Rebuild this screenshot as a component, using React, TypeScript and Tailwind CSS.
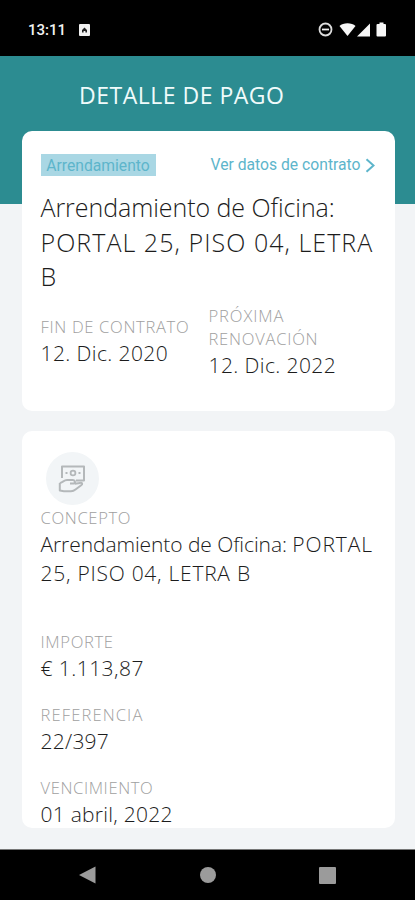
import type { ReactNode } from 'react';

interface Line {
    text: ReactNode;
    className: string;
}

interface FieldProps {
    labels: Line[];
    values: Line[];
}

function Field({ labels, values }: FieldProps) {
    return (
        <div className="font-light whitespace-nowrap">
            {labels.map((label, i) => (
                <div key={i} className={`h-[23px] text-[16.6px] leading-[23px] text-[#a0a0a0] ${label.className}`}>
                    {label.text}
                </div>
            ))}
            <div className="pt-px">
                {values.map((value, i) => (
                    <div key={i} className={`h-[28.5px] text-[21px] leading-[28.5px] text-[#1c1c1c] ${value.className}`}>
                        {value.text}
                    </div>
                ))}
            </div>
        </div>
    );
}

function StatusBar() {
    return (
        <div className="flex h-[56px] shrink-0 items-center justify-between bg-black pt-[4px] pr-[28px] pl-[28px] text-[#f2f2f2]">
            <div className="flex items-center gap-[14px]">
                <span className="w-[37px] font-['Roboto',sans-serif] text-[15px] leading-[20px] font-medium whitespace-nowrap">13:11</span>
                <svg width="11" height="12" viewBox="0 0 11 12">
                    <rect width="11" height="12" rx="1" fill="#f0f0f0" />
                    <path d="M3 8.500V6L5.500 3.500 8 6v2.500H6.400V7H4.600v1.500z" fill="#222" />
                </svg>
            </div>
            <svg width="70" height="16" viewBox="0 0 70 16" fill="#f7f7f7">
                <circle cx="8.500" cy="7.500" r="6" fill="none" stroke="#dcdcdc" strokeWidth="1.8" />
                <path d="M5 7.500h7" stroke="#eee" strokeWidth="1.8" />
                <path d="M22.500 4C26 .3 35 .3 38.500 4L30.500 14z" />
                <path d="M53 1.500V14.500H40z" />
                <path d="M60.500 2h2V.5h4V2h1.500q1 0 1 1v10.500q0 1-1 1h-7.500q-1 0-1-1V3q0-1 1-1z" />
            </svg>
        </div>
    );
}

function MoneyHandIcon() {
    return (
        <svg width="28" height="28" viewBox="0 0 28 28" fill="none" stroke="#b4b8ba" strokeWidth="2" strokeLinejoin="round">
            <path d="M4 13V1.500H26V15.500H18" />
            <circle cx="15" cy="8" r="2.400" strokeWidth="1.8" />
            <path d="M7.500 8h2M20.500 8h2" />
            <path d="M1.800 18C4.500 17.500 6 15 9 15H14.500C17.500 15 17.800 18.500 15 18.500H12M16.800 18.700L22 17.900C24.500 17.600 24.800 19.200 23.200 20.200L17.500 24.500C16.200 25.600 15 26.200 13 26.200H7C5 26.200 4 25.600 1.800 25.600V18" />
        </svg>
    );
}

export default function App() {
    return (
        <div className="flex h-[900px] w-[415px] flex-col overflow-hidden bg-[#f2f4f6] font-['Open_Sans',sans-serif]">
            <StatusBar />

            {/* Header */}
            <header className="h-[148px] shrink-0 bg-[#2c8c91] pt-[23px] pl-[79px]">
                <h1 className="text-[23px] leading-[32px] font-medium tracking-[0.5px] whitespace-nowrap text-[#f0fbfb]">DETALLE DE PAGO</h1>
            </header>

            <main className="-mt-[73.300px] flex grow flex-col gap-[20.500px] pr-[20.500px] pl-[21.500px]">
                {/* Contract */}
                <section className="h-[280px] shrink-0 rounded-[10px] bg-white px-[19px] pt-[23px]">
                    <div className="flex h-[22px] items-center justify-between font-['Roboto',sans-serif] text-[15.700px] leading-[22px] whitespace-nowrap text-[#5db5cb]">
                        <span className="h-[22px] w-[115px] bg-[#a9d7e4] pt-px text-center">Arrendamiento</span>
                        <span className="flex items-center pt-[1px]">
                            Ver datos de contrato
                            <svg className="ml-[4px]" width="11" height="15" viewBox="0 0 11 15" fill="none" stroke="currentColor" strokeWidth="2">
                                <path d="M1.500 1.200L8.500 7.500L1.500 13.800" />
                            </svg>
                        </span>
                    </div>
                    <h2 className="mt-[14.500px] text-[25px] leading-[34.500px] font-light whitespace-nowrap text-[#1c1c1c]">
                        <div className="tracking-[-0.06px]">Arrendamiento de Oficina:</div>
                        <div className="tracking-[1.05px]">PORTAL 25, PISO 04, LETRA</div>
                        <div>B</div>
                    </h2>
                    <div className="mt-[10px] grid grid-cols-[168px_1fr] items-center">
                        <Field
                            labels={[{ text: 'FIN DE CONTRATO', className: 'tracking-[0.66px]' }]}
                            values={[{ text: '12. Dic. 2020', className: 'tracking-[0.4px]' }]}
                        />
                        <Field
                            labels={[
                                { text: 'PRÓXIMA', className: 'tracking-[0.9px]' },
                                { text: 'RENOVACIÓN', className: 'tracking-[0.75px]' }
                            ]}
                            values={[{ text: '12. Dic. 2022', className: 'tracking-[0.4px]' }]}
                        />
                    </div>
                </section>

                {/* Payment */}
                <section className="h-[397px] shrink-0 overflow-hidden rounded-[10px] bg-white px-[19px] pt-[21px]">
                    <div className="ml-[5px] flex h-[53px] w-[53px] items-center justify-center rounded-full bg-[#f2f5f7]">
                        <MoneyHandIcon />
                    </div>
                    <div className="mt-[1px] flex flex-col">
                        <Field
                            labels={[{ text: 'CONCEPTO', className: 'tracking-[0.65px]' }]}
                            values={[
                                {
                                    text: (
                                        <>
                                            Arrendamiento de Oficina: <span className="tracking-[0.9px]">PORTAL</span>
                                        </>
                                    ),
                                    className: 'tracking-[-0.08px]'
                                },
                                { text: '25, PISO 04, LETRA B', className: 'tracking-[0.74px]' }
                            ]}
                        />
                        <div className="mt-[42.500px] flex flex-col gap-[20.500px]">
                            <Field
                                labels={[{ text: 'IMPORTE', className: 'tracking-[0.65px]' }]}
                                values={[{ text: '€ 1.113,87', className: 'tracking-[0.45px]' }]}
                            />
                            <Field
                                labels={[{ text: 'REFERENCIA', className: 'tracking-[1.1px]' }]}
                                values={[{ text: '22/397', className: 'tracking-[0.25px]' }]}
                            />
                            <Field
                                labels={[{ text: 'VENCIMIENTO', className: 'tracking-[0.6px]' }]}
                                values={[{ text: '01 abril, 2022', className: 'tracking-[0.25px]' }]}
                            />
                        </div>
                    </div>
                </section>
            </main>

            {/* Android navigation */}
            <nav className="flex h-[51px] shrink-0 items-center justify-between border-t border-[#777] bg-black pr-[79px] pl-[79px]">
                <svg width="17" height="18" viewBox="0 0 17 18" fill="#9b9b9b"><path d="M16.500.5v17L0 9z" /></svg>
                <div className="h-[16px] w-[16px] rounded-full bg-[#9b9b9b]" />
                <div className="h-[17px] w-[17px] rounded-[1px] bg-[#9b9b9b]" />
            </nav>
        </div>
    );
}
